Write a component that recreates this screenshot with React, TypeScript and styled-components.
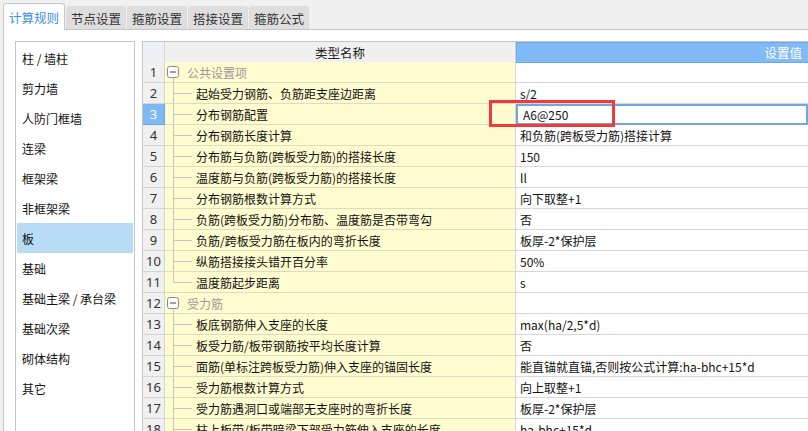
import React from 'react';
import styled, { createGlobalStyle } from 'styled-components';

const GlobalStyle = createGlobalStyle`
    html, body {
        margin: 0;
        padding: 0;
        background: #f0f0f0;
    }

    body {
        font-family: "Noto Sans CJK SC", "Noto Sans", sans-serif;
        color: #1a1a1a;
    }
`;

const Page = styled.div`
    width: 808px;
    height: 431px;
    overflow: hidden;
    display: flex;
    flex-direction: column;
    background: #f0f0f0;
`;

const TabBar = styled.div`
    display: flex;
    align-items: flex-end;
    height: 29px;
    padding-left: 3px;
    gap: 1px;
    position: relative;
    z-index: 1;
`;

const Tab = styled.div<{ $active?: boolean }>`
    display: flex;
    align-items: center;
    justify-content: center;
    box-sizing: border-box;
    width: ${(p) => (p.$active ? '62px' : '60px')};
    height: ${(p) => (p.$active ? '27px' : '23px')};
    margin-bottom: ${(p) => (p.$active ? '-1px' : '0')};
    border: 1px solid ${(p) => (p.$active ? '#c6c6c6' : '#dcdcdc')};
    border-bottom: none;
    border-radius: 3px 3px 0 0;
    background: ${(p) => (p.$active ? '#ffffff' : '#dedede')};
    color: ${(p) => (p.$active ? '#3a8ee6' : '#333333')};
    font-size: 12.5px;
    padding-top: ${(p) => (p.$active ? '1px' : '0')};
`;

const Content = styled.div`
    flex: 1;
    display: flex;
    gap: 7px;
    margin-left: 3px;
    padding: 11px 0 0 11px;
    background: #ffffff;
    border-top: 1px solid #c6c6c6;
    border-left: 1px solid #c6c6c6;
    min-height: 0;
`;

const SideList = styled.ul`
    list-style: none;
    margin: 0;
    padding: 1px 1px 0;
    width: 120px;
    box-sizing: border-box;
    flex: none;
    border: 1px solid #c6c6c6;
    border-bottom: none;
`;

const SideItem = styled.li<{ $selected?: boolean }>`
    height: 30px;
    display: flex;
    align-items: center;
    padding-left: 5px;
    font-size: 12px;
    color: #111111;
    background: ${(p) => (p.$selected ? '#b8dcf5' : 'transparent')};
`;

const Grid = styled.div`
    flex: 1;
    position: relative;
    border-top: 1px solid #c6c6c6;
    border-left: 1px solid #c6c6c6;
    min-width: 0;
`;

const Row = styled.div<{ $header?: boolean }>`
    display: grid;
    grid-template-columns: 22px 351px 1fr;
    height: ${(p) => (p.$header ? '20px' : '21px')};
    box-sizing: border-box;
    font-size: 12px;
`;

const NumCell = styled.div<{ $selected?: boolean; $corner?: boolean }>`
    display: flex;
    align-items: center;
    justify-content: center;
    box-sizing: border-box;
    border-right: 1px solid ${(p) => (p.$selected ? '#6aa6e6' : '#d4d4d4')};
    border-bottom: 1px solid ${(p) => (p.$selected ? '#6aa6e6' : '#d4d4d4')};
    background: ${(p) => (p.$selected ? '#7fb8f4' : p.$corner ? '#edf0f4' : '#f0f0f0')};
    color: ${(p) => (p.$selected ? '#ffffff' : '#333333')};
    font-family: "Noto Sans", "Liberation Sans", sans-serif;
    font-size: 13px;
`;

const HeadCell = styled.div<{ $value?: boolean }>`
    display: flex;
    align-items: center;
    justify-content: ${(p) => (p.$value ? 'flex-end' : 'center')};
    padding-right: ${(p) => (p.$value ? '6px' : '0')};
    box-sizing: border-box;
    font-size: 12.5px;
    background: ${(p) => (p.$value ? '#80bbf7' : '#f0f0f0')};
    color: ${(p) => (p.$value ? '#ffffff' : '#222222')};
    border: ${(p) => (p.$value ? '1px solid #6aa8ec' : 'none')};
    border-bottom: 1px solid ${(p) => (p.$value ? '#6aa8ec' : '#d4d4d4')};
    border-right: ${(p) => (p.$value ? 'none' : '1px solid #d4d4d4')};
`;

const NameCell = styled.div<{ $group?: boolean }>`
    display: flex;
    align-items: center;
    box-sizing: border-box;
    background: #fffdd0;
    border-right: 1px solid #d4d4d4;
    border-bottom: 1px solid #dcdcc0;
    color: ${(p) => (p.$group ? '#9a9a9a' : '#111111')};
    white-space: nowrap;
    overflow: hidden;
`;

const ValueCell = styled.div<{ $editing?: boolean }>`
    display: flex;
    align-items: center;
    box-sizing: border-box;
    padding-left: ${(p) => (p.$editing ? '5px' : '4px')};
    border-bottom: 1px solid #d8d8d8;
    border: ${(p) => (p.$editing ? '2px solid #6ea8e2' : undefined)};
    color: #111111;
    white-space: nowrap;
    overflow: hidden;
`;

const Label = styled.span<{ $group?: boolean }>`
    margin-left: ${(p) => (p.$group ? '6px' : '4px')};
`;

const Highlight = styled.div`
    position: absolute;
    left: 346px;
    top: 58px;
    width: 126px;
    height: 27px;
    box-sizing: border-box;
    border: 3px solid #f03a3c;
    pointer-events: none;
`;

type Kind = 'group' | 'child' | 'last';

const Connector = ({ kind }: { kind: Kind }) => {
    if (kind === 'group') {
        return (
            <svg width="14" height="20" viewBox="0 0 14 20" style={{ marginLeft: 2, flex: 'none' }}>
                <rect x="0.5" y="4.5" width="11" height="11" rx="2" fill="#ffffff" stroke="#8a8a8a" />
                <line x1="3" y1="10" x2="9" y2="10" stroke="#444" strokeWidth="1" />
                <line x1="6.5" y1="15.5" x2="6.5" y2="20" stroke="#c4c4c4" />
            </svg>
        );
    }
    return (
        <svg width="25" height="20" viewBox="0 0 25 20" style={{ marginLeft: 2, flex: 'none' }}>
            <line x1="6.5" y1="0" x2="6.5" y2={kind === 'last' ? 10.5 : 20} stroke="#c4c4c4" />
            <line x1="6.5" y1="10.5" x2="25" y2="10.5" stroke="#c4c4c4" />
        </svg>
    );
};

type Item = { name: string; value: string; kind: Kind };

const rows: Item[] = [
    { name: '公共设置项', value: '', kind: 'group' },
    { name: '起始受力钢筋、负筋距支座边距离', value: 's/2', kind: 'child' },
    { name: '分布钢筋配置', value: 'A6@250', kind: 'child' },
    { name: '分布钢筋长度计算', value: '和负筋(跨板受力筋)搭接计算', kind: 'child' },
    { name: '分布筋与负筋(跨板受力筋)的搭接长度', value: '150', kind: 'child' },
    { name: '温度筋与负筋(跨板受力筋)的搭接长度', value: 'll', kind: 'child' },
    { name: '分布钢筋根数计算方式', value: '向下取整+1', kind: 'child' },
    { name: '负筋(跨板受力筋)分布筋、温度筋是否带弯勾', value: '否', kind: 'child' },
    { name: '负筋/跨板受力筋在板内的弯折长度', value: '板厚-2*保护层', kind: 'child' },
    { name: '纵筋搭接接头错开百分率', value: '50%', kind: 'child' },
    { name: '温度筋起步距离', value: 's', kind: 'last' },
    { name: '受力筋', value: '', kind: 'group' },
    { name: '板底钢筋伸入支座的长度', value: 'max(ha/2,5*d)', kind: 'child' },
    { name: '板受力筋/板带钢筋按平均长度计算', value: '否', kind: 'child' },
    { name: '面筋(单标注跨板受力筋)伸入支座的锚固长度', value: '能直锚就直锚,否则按公式计算:ha-bhc+15*d', kind: 'child' },
    { name: '受力筋根数计算方式', value: '向上取整+1', kind: 'child' },
    { name: '受力筋遇洞口或端部无支座时的弯折长度', value: '板厚-2*保护层', kind: 'child' },
    { name: '柱上板带/板带暗梁下部受力筋伸入支座的长度', value: 'ha-bhc+15*d', kind: 'child' },
];

const tabs = ['计算规则', '节点设置', '箍筋设置', '搭接设置', '箍筋公式'];

const members = [
    '柱 / 墙柱',
    '剪力墙',
    '人防门框墙',
    '连梁',
    '框架梁',
    '非框架梁',
    '板',
    '基础',
    '基础主梁 / 承台梁',
    '基础次梁',
    '砌体结构',
    '其它',
];

const SELECTED_ROW = 3;

const App = () => {
    return (
        <Page>
            <GlobalStyle />
            <TabBar>
                {tabs.map((t, i) => (
                    <Tab key={t} $active={i === 0}>
                        {t}
                    </Tab>
                ))}
            </TabBar>
            <Content>
                <SideList>
                    {members.map((m) => (
                        <SideItem key={m} $selected={m === '板'}>
                            {m}
                        </SideItem>
                    ))}
                </SideList>
                <Grid>
                    <Row $header>
                        <NumCell $corner />
                        <HeadCell>类型名称</HeadCell>
                        <HeadCell $value>设置值</HeadCell>
                    </Row>
                    {rows.map((r, i) => {
                        const n = i + 1;
                        const group = r.kind === 'group';
                        return (
                            <Row key={n}>
                                <NumCell $selected={n === SELECTED_ROW}>{n}</NumCell>
                                <NameCell $group={group}>
                                    <Connector kind={r.kind} />
                                    <Label $group={group}>{r.name}</Label>
                                </NameCell>
                                <ValueCell $editing={n === SELECTED_ROW}>{r.value}</ValueCell>
                            </Row>
                        );
                    })}
                    <Highlight />
                </Grid>
            </Content>
        </Page>
    );
};

export default App;
